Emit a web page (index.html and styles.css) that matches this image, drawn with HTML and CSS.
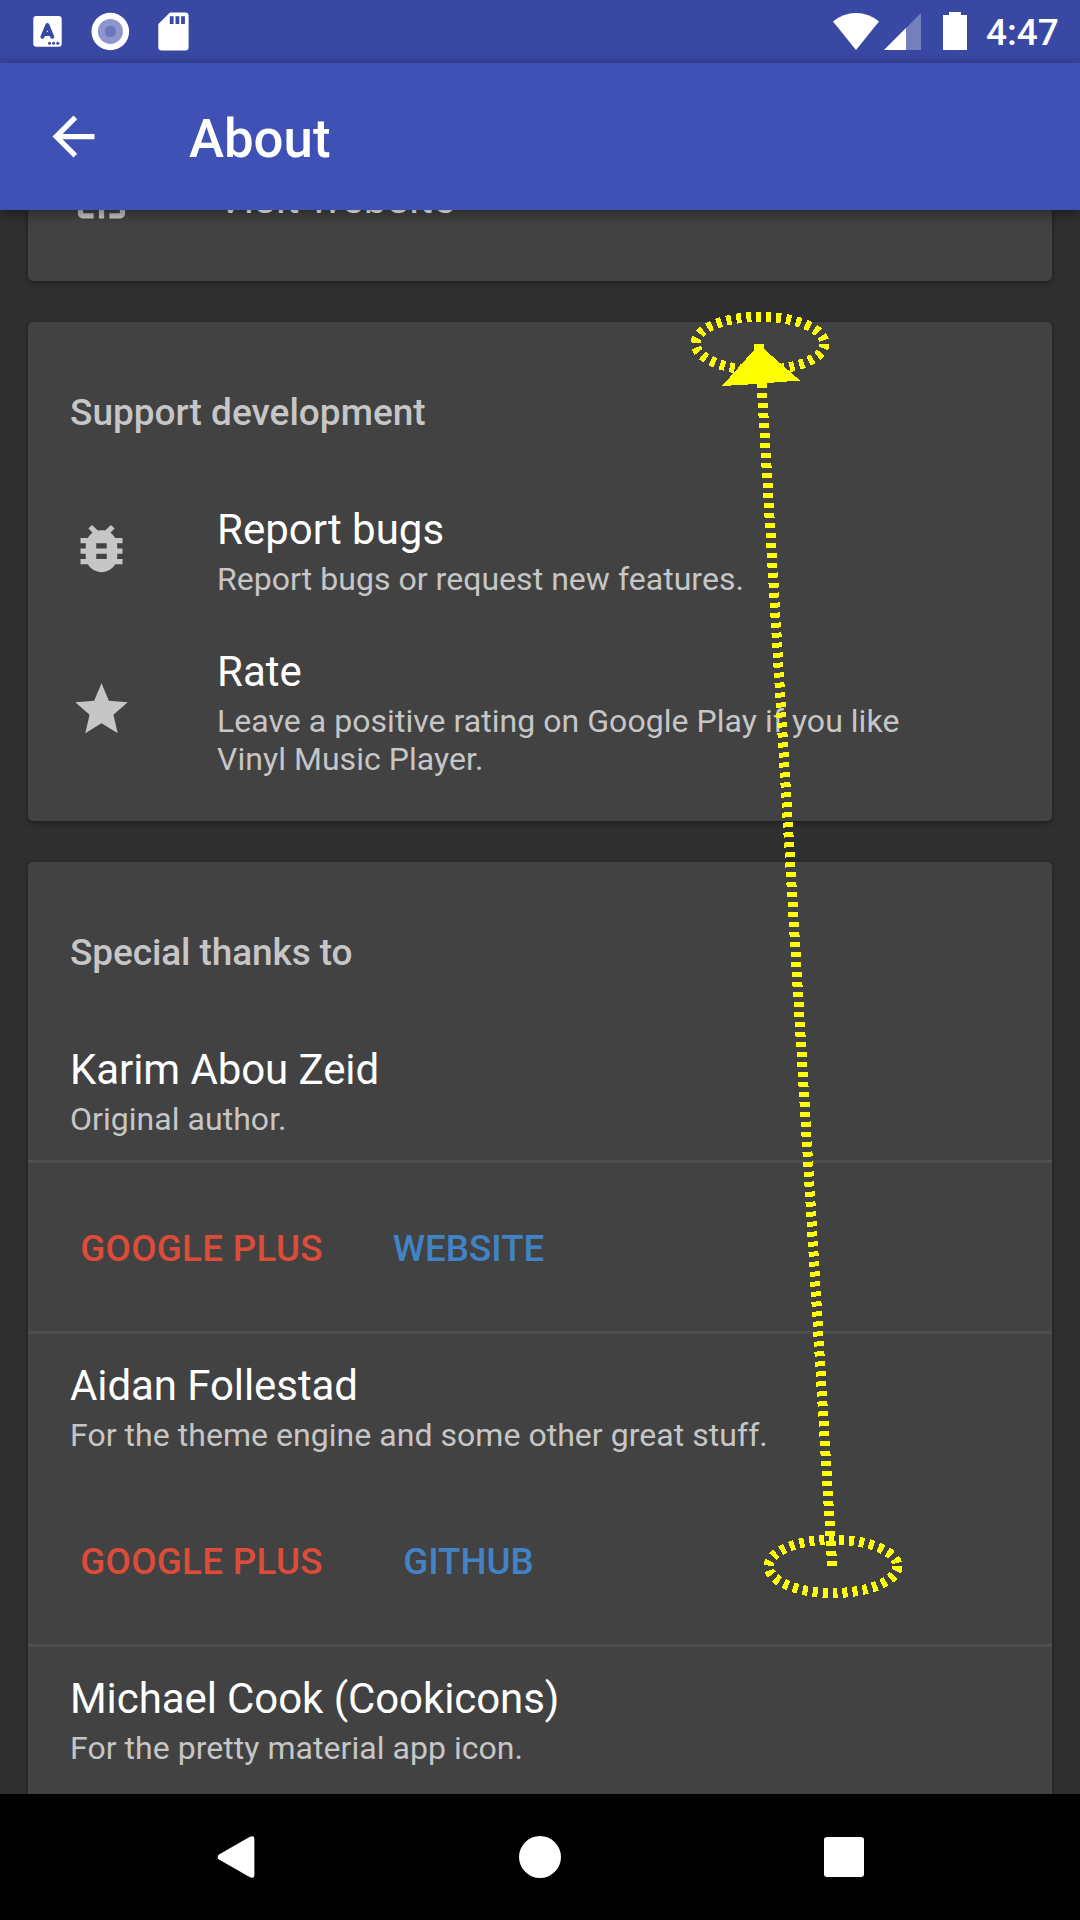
FILE: index.html
```html
<!DOCTYPE html>
<html lang="en">
<head>
<meta charset="utf-8">
<title>About</title>
<link rel="stylesheet" href="styles.css">
</head>
<body>
<div class="screen">
  <header class="status">
    <svg class="status-left" width="200" height="63" viewBox="0 0 200 63">
      <rect x="33.3" y="16" width="28.4" height="30.7" rx="3" fill="#fff"/>
      <path d="M42.4 36.8L47.4 25L52.2 36.8M44 34H51" fill="none" stroke="#3949a3" stroke-width="4" stroke-linecap="round" stroke-linejoin="round"/>
      <g fill="#3949a3"><circle cx="49.5" cy="43.2" r="1.5"/><circle cx="53.6" cy="43.2" r="1.5"/><circle cx="57.8" cy="43.2" r="1.5"/></g>
      <circle cx="110.3" cy="31.5" r="18.8" fill="#fff"/>
      <circle cx="110.4" cy="31.4" r="12.5" fill="#8e97cc"/>
      <circle cx="110.4" cy="31.4" r="5.7" fill="#6a77bb"/>
      <path d="M170 12.5H185.3A3.3 3.3 0 0 1 188.6 15.8V47.2A3.3 3.3 0 0 1 185.3 50.5H161.6A3.3 3.3 0 0 1 158.3 47.2V24Z" fill="#fff"/>
      <path d="M169.8 16.3h3.8V24h-3.8zM175.5 16.3h3.8V24h-3.8zM181.1 16.3h3.8V24h-3.8z" fill="#3949a3"/>
    </svg>
    <svg class="status-right" width="150" height="63" viewBox="830 0 150 63">
      <path d="M833 21.5Q843 13 856 13T879 21.5L856 50Z" fill="#fff"/>
      <path d="M884 50L921 13V50Z" fill="#fff" opacity=".3"/>
      <path d="M884 50L906 28V50Z" fill="#fff"/>
      <path d="M949 12h12v3h6v35h-24V15h6z" fill="#fff"/>
    </svg>
    <span class="clock">4:47</span>
  </header>

  <div class="toolbar">
    <svg class="icon" viewBox="0 0 24 24" fill="#fff"><path d="M20 11H7.83l5.59-5.59L12 4l-8 8 8 8 1.41-1.41L7.83 13H20v-2z"/></svg>
    <h1>About</h1>
  </div>

  <main class="content">
    <section class="card card-site">
      <div class="row">
        <svg class="icon" viewBox="0 0 24 24"><path d="M19 4H5c-1.11 0-2 .9-2 2v12c0 1.1.89 2 2 2h4v-2H5V8h14v10h-4v2h4c1.1 0 2-.9 2-2V6c0-1.1-.89-2-2-2zm-7 6l-4 4h3v6h2v-6h3l-4-4z"/></svg>
        <div class="text"><p class="title">Visit website</p></div>
      </div>
    </section>

    <section class="card">
      <h2>Support development</h2>
      <div class="rows">
        <div class="row">
          <svg class="icon" viewBox="0 0 24 24"><path d="M20 8h-2.81c-.45-.78-1.07-1.45-1.82-1.96L17 4.41 15.59 3l-2.17 2.17C12.96 5.06 12.49 5 12 5s-.96.06-1.41.17L8.41 3 7 4.41l1.62 1.63C7.88 6.55 7.26 7.22 6.81 8H4v2h2.09c-.05.33-.09.66-.09 1v1H4v2h2v1c0 .34.04.67.09 1H4v2h2.81c1.04 1.79 2.97 3 5.19 3s4.15-1.21 5.19-3H20v-2h-2.09c.05-.33.09-.66.09-1v-1h2v-2h-2v-1c0-.34-.04-.67-.09-1H20V8zm-6 8h-4v-2h4v2zm0-4h-4v-2h4v2z"/></svg>
          <div class="text">
            <p class="title">Report bugs</p>
            <p class="sub">Report bugs or request new features.</p>
          </div>
        </div>
        <div class="row">
          <svg class="icon" viewBox="0 0 24 24"><path d="M12 17.27L18.18 21l-1.64-7.03L22 9.24l-7.19-.61L12 2 9.19 8.63 2 9.24l5.46 4.73L5.82 21z"/></svg>
          <div class="text">
            <p class="title">Rate</p>
            <p class="sub">Leave a positive rating on Google Play if you like<br>Vinyl Music Player.</p>
          </div>
        </div>
      </div>
    </section>

    <section class="card">
      <h2 class="tight">Special thanks to</h2>
      <div class="person first">
        <p class="title">Karim Abou Zeid</p>
        <p class="sub">Original author.</p>
      </div>
      <hr>
      <div class="actions"><a class="plus">GOOGLE PLUS</a><a class="link">WEBSITE</a></div>
      <hr>
      <div class="person">
        <p class="title">Aidan Follestad</p>
        <p class="sub">For the theme engine and some other great stuff.</p>
      </div>
      <div class="actions"><a class="plus">GOOGLE PLUS</a><a class="link">GITHUB</a></div>
      <hr>
      <div class="person">
        <p class="title">Michael Cook (Cookicons)</p>
        <p class="sub">For the pretty material app icon.</p>
      </div>
    </section>
  </main>

  <nav class="navbar">
    <svg width="1080" height="126" viewBox="0 1794 1080 126" fill="#fff">
      <path d="M219 1854.4L249.5 1837Q254.4 1834.5 254.4 1839.5V1874.5Q254.4 1879.5 249.5 1877L219 1859.6Q216.2 1857 219 1854.4Z"/>
      <circle cx="540" cy="1857" r="21"/>
      <rect x="824" y="1837" width="40" height="40" rx="3"/>
    </svg>
  </nav>

  <!-- swipe gesture overlay -->
  <svg class="gesture" width="1080" height="1920" viewBox="0 0 1080 1920" shape-rendering="crispEdges">
    <g fill="none" stroke="#ff0" stroke-width="10" stroke-dasharray="5 5">
      <ellipse cx="760" cy="343.5" rx="64.5" ry="26.7"/>
      <ellipse cx="833" cy="1566.3" rx="64.5" ry="26.7"/>
      <path d="M832.2 1566L759.2 344"/>
    </g>
    <path d="M754 344H764V349L800 380.5L767 383V388H757V384L722 386L754 350Z" fill="#ff0"/>
  </svg>
</div>
</body>
</html>
```
FILE: styles.css
```css
* { box-sizing: border-box; margin: 0; padding: 0; }

body {
  background: #303030;
  color: #fff;
  font-family: Roboto, sans-serif;
}

.screen {
  position: relative;
  display: flex;
  flex-direction: column;
  width: 1080px;
  height: 1920px;
  overflow: hidden;
}

.status {
  display: flex;
  flex: 0 0 63px;
  align-items: center;
  background: #3949a3;
}

.status-right { margin-left: auto; }

.clock {
  width: 100px;
  padding: 2px 0 0 6px;
  font-size: 37px;
  font-weight: 500;
  line-height: 44px;
}

.toolbar {
  z-index: 1;
  display: flex;
  flex: 0 0 147px;
  align-items: center;
  gap: 84px;
  padding-left: 42px;
  background: #3f51b5;
  box-shadow: 0 3px 12px rgba(0, 0, 0, .45);
}

.toolbar h1 {
  padding-top: 4px;
  font-size: 52.75px;
  font-weight: 500;
  line-height: 62px;
}

.icon { flex: none; width: 63px; height: 63px; }

.content {
  display: flex;
  flex: 0 0 1584px;
  flex-direction: column;
  gap: 41px;
  padding: 0 28px;
  overflow: hidden;
}

.card {
  flex: none;
  padding: 69px 0 42px;
  border-radius: 5px;
  background: #424242;
  box-shadow: 0 2px 6px rgba(0, 0, 0, .4);
}

.card-site {
  height: 131px;
  margin-top: -60px;
  padding: 15.5px 0 0;
}

.card h2 {
  padding-left: 42px;
  color: #c6c6c6;
  font-size: 37px;
  font-weight: 500;
  line-height: 44px;
}

.card h2.tight { letter-spacing: -.1px; }

.rows {
  display: flex;
  flex-direction: column;
  gap: 48px;
  padding-top: 70px;
}

.row {
  display: flex;
  align-items: center;
  gap: 84px;
  padding-left: 42px;
}

.row .icon { margin-bottom: 7px; fill: #c6c6c6; }
.card-site .row .icon { margin-bottom: 3px; }

.title { font-size: 42px; line-height: 50px; }
.person .title { letter-spacing: -.08px; }

.sub {
  padding: 5px 0 1px;
  color: #c6c6c6;
  font-size: 32px;
  letter-spacing: .04px;
  line-height: 38px;
}

.person { padding: 27px 42px 21px; }
.person.first { padding-top: 70px; }

hr { height: 3px; border: 0; background: #4e4e4e; }

.actions {
  display: flex;
  align-items: center;
  height: 168px;
  padding: 4px 0 0 22px;
  font-size: 36.75px;
  font-weight: 500;
  line-height: 44px;
  text-align: center;
}

.plus { width: 303px; color: #dd4b39; letter-spacing: .3px; }
.link { width: 231px; color: #4183c4; }

.navbar { z-index: 1; flex: 0 0 126px; background: #000; }
.navbar svg { display: block; }

.gesture { position: absolute; top: 0; left: 0; z-index: 2; }
```
